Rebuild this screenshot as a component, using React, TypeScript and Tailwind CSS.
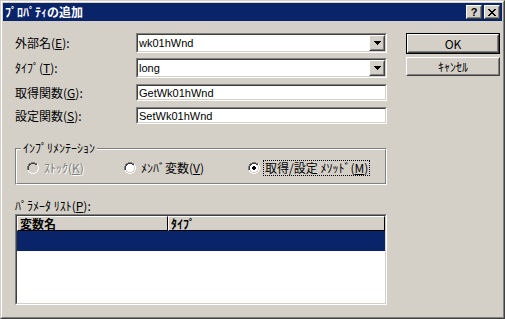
import React from "react";

const font = "font-['Noto_Sans_CJK_JP','Noto_Sans',sans-serif]";
const latin = "font-['Liberation_Sans','Noto_Sans_CJK_JP',sans-serif] text-[11px]";

function Raised({ className = "", children }: { className?: string; children?: React.ReactNode }) {
  return (
    <div className={"border border-t-white border-l-white border-r-[#404040] border-b-[#404040] bg-[#d4d0c8] " + className}>
      <div className="w-full h-full border border-t-[#d4d0c8] border-l-[#d4d0c8] border-r-[#808080] border-b-[#808080] flex items-center justify-center">
        {children}
      </div>
    </div>
  );
}

function Sunken({ className = "", children }: { className?: string; children?: React.ReactNode }) {
  return (
    <div className={"border border-t-[#808080] border-l-[#808080] border-r-white border-b-white " + className}>
      <div className="w-full h-full border border-t-[#404040] border-l-[#404040] border-r-[#d4d0c8] border-b-[#d4d0c8] bg-white flex items-center">
        {children}
      </div>
    </div>
  );
}

function Arrow() {
  return (
    <svg width="7" height="4" viewBox="0 0 7 4" shapeRendering="crispEdges">
      <path d="M0 0h7v1H0zM1 1h5v1H1zM2 2h3v1H2zM3 3h1v1H3z" fill="#000" />
    </svg>
  );
}

function Combo({ value }: { value: string }) {
  return (
    <Sunken className="h-[20px] w-full">
      <span className={"flex-1 pl-[1px] leading-[14px] text-black " + latin}>{value}</span>
      <Raised className="w-[16px] h-[16px]">
        <Arrow />
      </Raised>
    </Sunken>
  );
}

function Edit({ value }: { value: string }) {
  return (
    <Sunken className="h-[17px] w-full">
      <span className={"flex-1 pl-[1px] leading-[14px] text-black " + latin}>{value}</span>
    </Sunken>
  );
}

function Radio({ checked, disabled }: { checked?: boolean; disabled?: boolean }) {
  return (
    <svg width="12" height="12" viewBox="0 0 12 12" shapeRendering="crispEdges" className="shrink-0">
      <path d="M4 0h4v1H4zM2 1h2v1H2zM8 1h2v1H8zM1 2h1v2H1zM0 4h1v4H0z" fill="#808080" />
      <path d="M4 1h4v1H4zM2 2h2v1H2zM8 2h2v1H8zM2 3h1v1H2zM1 4h1v4H1z" fill="#404040" />
      <path d="M10 2h1v2h-1zM11 4h1v4h-1zM10 8h1v2h-1zM8 10h2v1H8zM2 10h2v1H2zM4 11h4v1H4zM1 8h1v2H1z" fill="#fff" />
      <path d="M9 3h1v1H9zM10 4h1v4h-1zM9 8h1v1H9zM8 9h1v1H8zM3 9h1v1H3zM4 10h4v1H4zM2 8h1v1H2z" fill="#d4d0c8" />
      <path d="M4 2h4v1H4zM3 3h6v1H3zM2 4h8v4H2zM3 8h6v1H3zM4 9h4v1H4z" fill={disabled ? "#d4d0c8" : "#fff"} />
      {checked && <path d="M5 4h2v1H5zM4 5h4v2H4zM5 7h2v1H5z" fill="#000" />}
    </svg>
  );
}

export default function App() {
  return (
    <div className={"w-[505px] h-[319px] bg-[#d4d0c8] border border-t-[#d4d0c8] border-l-[#d4d0c8] border-r-[#404040] border-b-[#404040] text-black " + font}>
      <div className="w-full h-full border border-t-white border-l-white border-r-[#808080] border-b-[#808080] p-px flex flex-col">
        {/* Title bar */}
        <div className="h-[18px] bg-[#0a246a] flex items-center pl-[2px] pr-[2px]">
          <span className="flex-1 text-white font-bold text-[12px] leading-[14px]">ﾌﾟﾛﾊﾟﾃｨの追加</span>
          <Raised className="w-[16px] h-[14px] mr-[2px]">
            <span className="text-[11px] font-bold leading-[11px] font-['Liberation_Sans',sans-serif]">?</span>
          </Raised>
          <Raised className="w-[16px] h-[14px]">
            <svg width="8" height="7" viewBox="0 0 8 7" shapeRendering="crispEdges">
              <path d="M0 0h2v1H0zM6 0h2v1H6zM1 1h2v1H1zM5 1h2v1H5zM2 2h4v1H2zM3 3h2v1H3zM2 4h4v1H2zM1 5h2v1H1zM5 5h2v1H5zM0 6h2v1H0zM6 6h2v1H6z" fill="#000" />
            </svg>
          </Raised>
        </div>

        {/* Body */}
        <div className="flex-1 flex pt-[12px] pl-[12px] text-[12px] leading-[14px]">
          <div className="w-[372px] flex flex-col">
            <div className="grid grid-cols-[121px_251px] items-center gap-y-[5px]">
              <span className="h-[14px]">外部名(<u>E</u>):</span>
              <Combo value="wk01hWnd" />
              <span className="h-[14px]">ﾀｲﾌﾟ(<u>T</u>):</span>
              <Combo value="long" />
              <span className="h-[14px] mt-[1px]">取得関数(<u>G</u>):</span>
              <div className="mt-[1px]"><Edit value="GetWk01hWnd" /></div>
              <span className="h-[14px] mt-[1px]">設定関数(<u>S</u>):</span>
              <div className="mt-[1px]"><Edit value="SetWk01hWnd" /></div>
            </div>

            {/* Group box */}
            <div className="relative mt-[24px] h-[37px] border border-t-[#808080] border-l-[#808080] border-r-white border-b-white">
              <div className="h-full border border-t-white border-l-white border-r-[#808080] border-b-[#808080]" />
              <span className="absolute -top-[8px] left-[5px] h-[14px] bg-[#d4d0c8] px-[2px]">ｲﾝﾌﾟﾘﾒﾝﾃｰｼｮﾝ</span>
              <div className="absolute inset-0 flex items-center pl-[11px] pt-[2px]">
                <Radio disabled />
                <span className="ml-[5px] w-[80px] h-[14px] text-[#808080] [text-shadow:1px_1px_0_#fff]">ｽﾄｯｸ(<u>K</u>)</span>
                <Radio />
                <span className="ml-[5px] w-[107px] h-[14px]">ﾒﾝﾊﾞ変数(<u>V</u>)</span>
                <Radio checked />
                <span className="ml-[4px] h-[14px] px-[1px] outline outline-1 outline-dotted outline-black">取得/設定 ﾒｿｯﾄﾞ(<u>M</u>)</span>
              </div>
            </div>

            <span className="mt-[14px] h-[14px]">ﾊﾟﾗﾒｰﾀ ﾘｽﾄ(<u>P</u>):</span>

            {/* List view */}
            <div className="mt-[1px] h-[91px] border border-t-[#808080] border-l-[#808080] border-r-white border-b-white">
              <div className="w-full h-full border border-t-[#404040] border-l-[#404040] border-r-[#d4d0c8] border-b-[#d4d0c8] bg-white flex flex-col">
                <div className="flex h-[15px]">
                  <div className="w-[151px] h-full border border-t-white border-l-white border-r-black border-b-black bg-[#d4d0c8] flex items-center pl-[2px] font-bold">
                    変数名
                  </div>
                  <div className="flex-1 h-full border border-t-white border-l-white border-r-black border-b-black bg-[#d4d0c8] flex items-center pl-[2px] font-bold">
                    ﾀｲﾌﾟ
                  </div>
                </div>
                <div className="h-[20px] bg-[#0a246a]" />
              </div>
            </div>
          </div>

          {/* Buttons */}
          <div className="ml-[19px] flex flex-col w-[94px]">
            <div className="h-[21px] border border-black">
              <Raised className="w-full h-full">OK</Raised>
            </div>
            <Raised className="mt-[3px] h-[19px] w-full">ｷｬﾝｾﾙ</Raised>
          </div>
        </div>
      </div>
    </div>
  );
}
